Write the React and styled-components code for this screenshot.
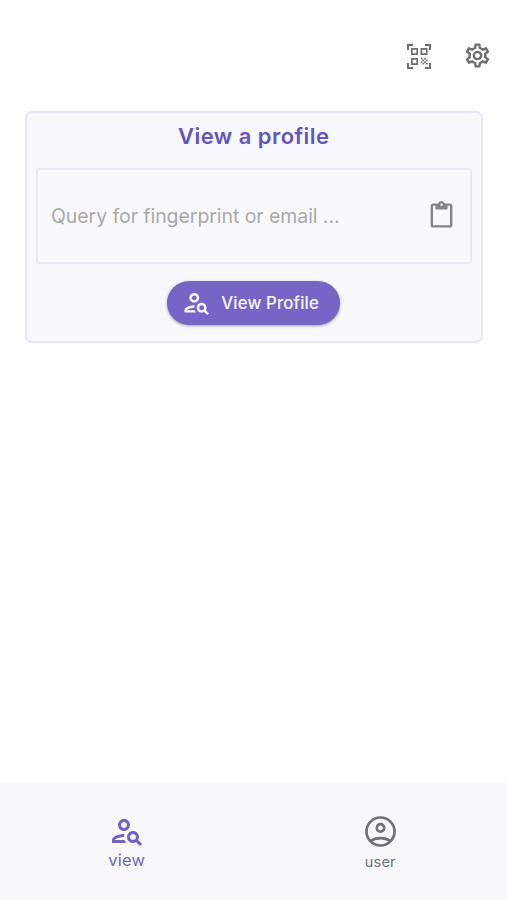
import React from 'react';
import styled, { createGlobalStyle } from 'styled-components';
import {
  MdContentPaste,
  MdOutlinePersonSearch,
  MdOutlineSettings,
} from 'react-icons/md';

const GlobalStyle = createGlobalStyle`
  * {
    box-sizing: border-box;
  }
  body {
    margin: 0;
    background: #fefefe;
    font-family: Inter, "Liberation Sans", sans-serif;
  }
  button, input {
    font: inherit;
    letter-spacing: inherit;
    border: none;
    padding: 0;
  }
  svg {
    display: block;
    flex-shrink: 0;
  }
`

const Screen = styled.div`
  display: flex;
  flex-direction: column;
  height: 900px;
`

const TopBar = styled.header`
  display: flex;
  justify-content: flex-end;
  align-items: center;
  gap: 29px;
  height: 111px;
  padding: 0 15px 0 0;
`

const IconButton = styled.button`
  display: flex;
  background: none;
  color: ${({ $color }) => $color || '#6f6f70'};
`

const Content = styled.main`
  flex: 1;
  padding: 0 24.5px 0 25px;
`

const Card = styled.section`
  display: flex;
  flex-direction: column;
  align-items: center;
  height: 232px;
  padding: 0 9px;
  background: #f8f8fc;
  border: 2px solid #e9e7f6;
  border-radius: 7px;
`

const Title = styled.h1`
  margin: 9px 0 17px;
  font-size: 22px;
  font-weight: 600;
  line-height: 29px;
  letter-spacing: 0.45px;
  color: #6555bb;
`

const Field = styled.div`
  display: flex;
  align-items: center;
  align-self: stretch;
  height: 96px;
  padding: 0 13.5px 1px 13px;
  background: #f9f9fb;
  border: 2px solid #e9e7f6;
  border-radius: 4px;
`

const Input = styled.input`
  flex: 1;
  min-width: 0;
  background: none;
  font-size: 19.5px;
  letter-spacing: -0.07px;
  outline: none;
  &::placeholder {
    color: #a9a9ab;
    opacity: 1;
  }
`

const PrimaryButton = styled.button`
  display: flex;
  align-items: center;
  gap: 9.5px;
  width: 173px;
  height: 44px;
  margin-top: 17px;
  && {
    padding-left: 15px;
  }
  background: #7665c7;
  border-radius: 22px;
  box-shadow: 0 1px 3px rgba(0, 0, 0, 0.35);
  color: #f8f6fe;
  font-size: 16.8px;
  font-weight: 550;
  letter-spacing: 0.15px;
  white-space: nowrap;
`

const BottomNav = styled.nav`
  display: grid;
  grid-template-columns: 1fr 1fr;
  height: 118px;
  background: #f8f8fb;
`

const NavItem = styled.button`
  display: flex;
  flex-direction: column;
  align-items: center;
  && {
    padding-top: 31px;
  }
  background: none;
  color: ${({ $active }) => ($active ? '#7262c4' : '#727273')};
`

const NavLabel = styled.span`
  font-size: ${({ $active }) => ($active ? '16.5px' : '14.5px')};
  line-height: ${({ $active }) => ($active ? '23px' : '24px')};
  letter-spacing: 0.2px;
`

function ScanIcon() {
  return (
    <svg width="30" height="30" viewBox="0 0 30 30" fill="none" stroke="currentColor" strokeWidth="2">
      <path d="M4 9V4h5M21 4h5v5M26 22v5h-5M9 27H4v-5" />
      <path d="M7.8 7.8h5.4v5.4H7.8zM17.3 7.8h5.4v5.4h-5.4zM7.8 17.8h5.4v5.4H7.8z" strokeWidth="1.7" />
      <path
        stroke="none"
        fill="currentColor"
        d="M16.8 16.8h1.7v1.7h-1.7zM20.2 16.8h1.7v1.7h-1.7zM18.5 18.5h1.7v1.7h-1.7zM21.9 18.5h1.7v1.7h-1.7zM16.8 20.2h1.7v1.7h-1.7zM20.2 20.2h1.7v1.7h-1.7zM18.5 21.9h1.7v1.7h-1.7zM21.9 21.9h1.7v1.7h-1.7z"
      />
    </svg>
  )
}

function AccountIcon({ size }) {
  return (
    <svg width={size} height={size} viewBox="0 0 37 37" fill="none" stroke="currentColor" strokeWidth="2.7">
      <circle cx="18.5" cy="18.5" r="14" />
      <circle cx="18.5" cy="14.9" r="3.7" />
      <path d="M8.2 28.2c2.8-2 6.4-3.1 10.3-3.1s7.5 1.1 10.3 3.1" />
    </svg>
  )
}

const navItems = [
  { label: 'view', Icon: MdOutlinePersonSearch, size: 36, active: true },
  { label: 'user', Icon: AccountIcon, size: 37 },
]

export default function App() {
  return (
    <>
      <GlobalStyle />
      <Screen>
        <TopBar>
          <IconButton aria-label="Scan"><ScanIcon /></IconButton>
          <IconButton aria-label="Settings"><MdOutlineSettings size={29} /></IconButton>
        </TopBar>
        <Content>
          <Card>
            <Title>View a profile</Title>
            <Field>
              <Input placeholder="Query for fingerprint or email ..." />
              <IconButton aria-label="Paste" $color="#858586"><MdContentPaste size={29} /></IconButton>
            </Field>
            <PrimaryButton>
              <MdOutlinePersonSearch size={29.5} />
              View Profile
            </PrimaryButton>
          </Card>
        </Content>
        <BottomNav>
          {navItems.map(({ label, Icon, size, active }) => (
            <NavItem key={label} $active={active}>
              <Icon size={size} />
              <NavLabel $active={active}>{label}</NavLabel>
            </NavItem>
          ))}
        </BottomNav>
      </Screen>
    </>
  )
}
